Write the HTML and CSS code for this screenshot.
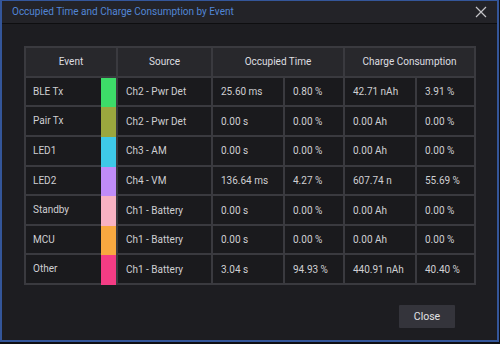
FILE: index.html
```html
<!DOCTYPE html>
<html lang="en">
<head>
  <meta charset="UTF-8" />
  <title>Occupied Time and Charge Consumption by Event</title>
  <link rel="stylesheet" href="styles.css">
</head>
<body>
  <div class="dialog">
    <header class="title-bar">
      <span class="title">Occupied Time and Charge Consumption by Event</span>
      <button class="close-x" aria-label="Close">
        <svg width="12" height="12" viewBox="0 0 12 12">
          <path d="M1 1 L11 11 M11 1 L1 11" stroke="#c4c4c8" stroke-width="1.2" fill="none" />
        </svg>
      </button>
    </header>

    <main class="dialog-body">
      <div class="event-table">
        <div class="head">Event</div>
        <div class="head">Source</div>
        <div class="head span2">Occupied Time</div>
        <div class="head span2">Charge Consumption</div>

        <div class="cell event">BLE Tx<span class="swatch" style="--c:#3ddc68"></span></div>
        <div class="cell">Ch2 - Pwr Det</div>
        <div class="cell">25.60 ms</div>
        <div class="cell">0.80 %</div>
        <div class="cell">42.71 nAh</div>
        <div class="cell">3.91 %</div>

        <div class="cell event">Pair Tx<span class="swatch" style="--c:#9ba73e"></span></div>
        <div class="cell">Ch2 - Pwr Det</div>
        <div class="cell">0.00 s</div>
        <div class="cell">0.00 %</div>
        <div class="cell">0.00 Ah</div>
        <div class="cell">0.00 %</div>

        <div class="cell event">LED1<span class="swatch" style="--c:#3ec9e8"></span></div>
        <div class="cell">Ch3 - AM</div>
        <div class="cell">0.00 s</div>
        <div class="cell">0.00 %</div>
        <div class="cell">0.00 Ah</div>
        <div class="cell">0.00 %</div>

        <div class="cell event">LED2<span class="swatch" style="--c:#c08cf8"></span></div>
        <div class="cell">Ch4 - VM</div>
        <div class="cell">136.64 ms</div>
        <div class="cell">4.27 %</div>
        <div class="cell">607.74 n</div>
        <div class="cell">55.69 %</div>

        <div class="cell event">Standby<span class="swatch" style="--c:#f8b2c2"></span></div>
        <div class="cell">Ch1 - Battery</div>
        <div class="cell">0.00 s</div>
        <div class="cell">0.00 %</div>
        <div class="cell">0.00 Ah</div>
        <div class="cell">0.00 %</div>

        <div class="cell event">MCU<span class="swatch" style="--c:#f8a840"></span></div>
        <div class="cell">Ch1 - Battery</div>
        <div class="cell">0.00 s</div>
        <div class="cell">0.00 %</div>
        <div class="cell">0.00 Ah</div>
        <div class="cell">0.00 %</div>

        <div class="cell event">Other<span class="swatch" style="--c:#f43c84"></span></div>
        <div class="cell">Ch1 - Battery</div>
        <div class="cell">3.04 s</div>
        <div class="cell">94.93 %</div>
        <div class="cell">440.91 nAh</div>
        <div class="cell">40.40 %</div>
      </div>

      <div class="actions">
        <button class="close-btn">Close</button>
      </div>
    </main>
  </div>
</body>
</html>
```

FILE: styles.css
```css
* {
  box-sizing: border-box;
}
body {
  margin: 0;
  background: #101013;
  font-family: Roboto, "Liberation Sans", sans-serif;
  width: 500px;
  height: 344px;
  overflow: hidden;
}

.dialog {
  width: 499px;
  height: 342px;
  border: 2px solid #34569a;
  border-top-width: 1px;
  background: #1d1d21;
  display: flex;
  flex-direction: column;
}

.title-bar {
  height: 25px;
  background: #232328;
  border-bottom: 1px solid #0e0e10;
  display: flex;
  align-items: center;
  justify-content: space-between;
  padding: 0 10px 0 10px;
}
.title {
  color: #5286d6;
  font-size: 10px;
}
.close-x {
  background: transparent;
  border: none;
  padding: 0;
  width: 12px;
  height: 12px;
  display: flex;
  cursor: pointer;
}

.dialog-body {
  flex-grow: 1;
  display: flex;
  flex-direction: column;
  padding: 22px 21px 12px 22px;
}

.event-table {
  display: grid;
  grid-template-columns: 90px 93px 70px 58px 70px 57px;
  grid-template-rows: 28px repeat(7, 27.6px);
  gap: 2px;
  padding: 2px;
  background: #3a3a3f;
  width: 452px;
  font-size: 10px;
  color: #cfcfd2;
}

.head {
  background: #28282c;
  display: flex;
  align-items: center;
  justify-content: center;
  color: #dedee0;
}
.head.span2 {
  grid-column: span 2;
}

.cell {
  background: #1a1a1d;
  display: flex;
  align-items: center;
  padding-left: 8px;
}
.cell.event {
  padding-left: 7px;
  justify-content: space-between;
  align-items: stretch;
  line-height: 27.6px;
}
.swatch {
  width: 15px;
  background: var(--c);
  box-shadow: 0 2px 0 var(--c);
}

.actions {
  display: flex;
  justify-content: flex-end;
  margin-top: 20px;
  padding-right: 21px;
}
.close-btn {
  width: 56px;
  height: 23px;
  background: #34343b;
  border: none;
  border-radius: 1px;
  color: #e2e2e4;
  font-family: inherit;
  font-size: 10.5px;
  cursor: pointer;
}
```
